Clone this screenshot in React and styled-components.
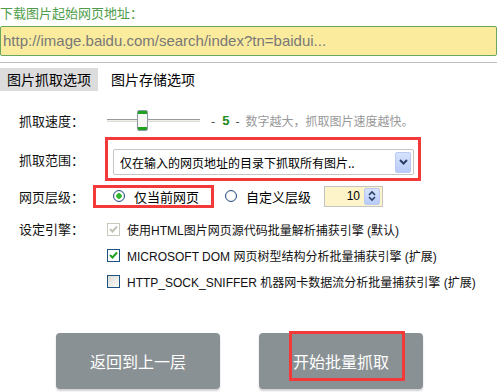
import React from 'react';
import styled, { createGlobalStyle } from 'styled-components';

const Global = createGlobalStyle`
    html, body {
        margin: 0;
        padding: 0;
        background: #fff;
    }
    body {
        font-family: "Liberation Sans", "Noto Sans CJK SC", sans-serif;
        color: #000;
    }
`

const Page = styled.div`
    width: 498px;
    height: 392px;
    overflow: hidden;
    display: flex;
    flex-direction: column;
`
const Title = styled.div`
    height: 26px;
    line-height: 26px;
    font-size: 13px;
    color: #4f9d4a;
    font-family: "Noto Sans CJK SC", sans-serif;
`
const UrlBox = styled.div`
    box-sizing: border-box;
    width: 497px;
    height: 30px;
    border: 1px solid #6aa75c;
    border-radius: 2px;
    background: #fbec9d;
    color: #787878;
    font-size: 15px;
    line-height: 28px;
    padding-left: 2px;
    white-space: nowrap;
    overflow: hidden;
`
const Divider = styled.div`
    margin-top: 6px;
    height: 1px;
    width: 497px;
    background: #bdbdbd;
`
const Tabs = styled.div`
    display: flex;
    margin-top: 5px;
    gap: 6px;
`
const Tab = styled.div`
    height: 23px;
    line-height: 23px;
    padding: 0 7px;
    font-size: 14px;
    font-family: "Noto Sans CJK SC", sans-serif;
    background: ${p => (p.$active ? '#dcdcdc' : 'transparent')};
`
const Form = styled.div`
    display: flex;
    flex-direction: column;
    padding-left: 19px;
    margin-top: 13px;
`
const Row = styled.div`
    display: flex;
    align-items: center;
    height: ${p => (p.$h ? `${p.$h}px` : 'auto')};
    margin-top: ${p => p.$mt || 0}px;
`
const Label = styled.div`
    width: ${p => p.$w || 88}px;
    flex-shrink: 0;
    font-size: 13px;
    font-family: "Noto Sans CJK SC", sans-serif;
    color: #111;
    align-self: ${p => (p.$top ? 'flex-start' : 'auto')};
    line-height: ${p => (p.$top ? '26px' : 'normal')};
`
const Highlight = styled.div`
    display: flex;
    align-items: center;
    box-sizing: border-box;
    border: 3px solid #f23a3a;
    padding: ${p => p.$pad};
    height: ${p => p.$h}px;
`

/* slider */
const Slider = styled.div`
    position: relative;
    width: 93px;
    height: 22px;
    display: flex;
    align-items: center;
`
const Track = styled.div`
    width: 100%;
    height: 3px;
    background: #f1efe6;
    border-top: 1px solid #999;
    border-bottom: 1px solid #ddd;
    box-sizing: border-box;
`
const Thumb = styled.div`
    position: absolute;
    left: 30px;
    top: 0;
    width: 11px;
    height: 21px;
    box-sizing: border-box;
    border: 1px solid #8a9aa6;
    border-radius: 2px;
    background: linear-gradient(to bottom, #21a121 0, #21a121 3px, #f6f6f2 3px, #f6f6f2 calc(100% - 3px), #21a121 calc(100% - 3px));
`
const SpeedNote = styled.div`
    display: flex;
    align-items: center;
    margin-left: 11px;
    font-size: 12px;
    font-family: "Noto Sans CJK SC", sans-serif;
    color: #999;
`
const Dash = styled.span`
    color: #333;
`
const Speed = styled.span`
    color: #1d8a1d;
    font-weight: bold;
    font-size: 13px;
    margin: 0 6px 0 7px;
    font-family: "Liberation Sans", sans-serif;
`
const Hint = styled.span`
    margin-left: 6px;
`

/* select */
const Select = styled.div`
    box-sizing: border-box;
    width: 301px;
    height: 26px;
    border: 1px solid #c5c5c5;
    border-radius: 2px;
    background: #fff;
    display: flex;
    align-items: center;
    justify-content: space-between;
    padding: 0 2px 0 6px;
    font-size: 12px;
    font-family: "Noto Sans CJK SC", sans-serif;
`
const ArrowBtn = styled.div`
    box-sizing: border-box;
    width: ${p => p.$w}px;
    height: ${p => p.$h}px;
    border: 1px solid #b9c9f4;
    border-radius: 2px;
    background: linear-gradient(to bottom, #d7e3fd, #b8cbf8);
    display: flex;
    align-items: center;
    justify-content: center;
`

/* radios */
const Radio = styled.span`
    box-sizing: border-box;
    width: 12px;
    height: 12px;
    border-radius: 50%;
    border: 1px solid #1f4f7f;
    background: radial-gradient(circle, ${p => (p.$on ? '#2fb52f 0, #2fb52f 2.5px,' : '')} #fff 3px, #e4e2da 100%);
    flex-shrink: 0;
`
const Option = styled.div`
    display: flex;
    align-items: center;
    gap: 9px;
    font-size: 13px;
    font-family: "Noto Sans CJK SC", sans-serif;
    margin-left: ${p => p.$ml || 0}px;
`
const NumberBox = styled.div`
    box-sizing: border-box;
    width: 59px;
    height: 21px;
    margin-left: 13px;
    border: 1px solid #c4c4c4;
    background: #fdf5c9;
    display: flex;
    align-items: center;
    justify-content: flex-end;
    gap: 4px;
    padding-right: 2px;
    font-size: 12px;
    font-family: "Liberation Sans", sans-serif;
`

/* checkboxes */
const Check = styled.span`
    box-sizing: border-box;
    width: 13px;
    height: 13px;
    border: 1px solid ${p => (p.$disabled ? '#cac8bb' : '#1c5180')};
    background: ${p => (p.$checked || p.$disabled ? '#fff' : 'linear-gradient(135deg, #dcdcd6, #fafaf8)')};
    display: flex;
    align-items: center;
    justify-content: center;
    flex-shrink: 0;
`
const EngineText = styled.span`
    margin-left: 7px;
    font-size: 12px;
    font-family: "Liberation Sans", "Noto Sans CJK SC", sans-serif;
    color: #111;
    white-space: nowrap;
`
const Engines = styled.div`
    display: flex;
    flex-direction: column;
`

/* buttons */
const Buttons = styled.div`
    display: flex;
    gap: 39px;
    padding-left: 56px;
    margin-top: 39px;
`
const Button = styled.div`
    position: relative;
    width: 164px;
    height: 56px;
    border-radius: 4px;
    background: #8a9194;
    box-shadow: 0 2px 2px rgba(0,0,0,0.18);
    color: #fff;
    font-size: 16px;
    font-family: "Noto Sans CJK SC", sans-serif;
    display: flex;
    align-items: center;
    justify-content: center;
`
const Mark = styled.div`
    position: absolute;
    left: 30px;
    top: -2px;
    width: 116px;
    height: 50px;
    box-sizing: border-box;
    border: 3px solid #f23a3a;
`

const Chevron = () => (
    <svg width="9" height="6" viewBox="0 0 9 6">
        <path d="M1 1 L4.5 4.5 L8 1" fill="none" stroke="#2a3f66" strokeWidth="2"/>
    </svg>
)

const UpDown = () => (
    <svg width="8" height="12" viewBox="0 0 8 12">
        <path d="M1 5 L4 2 L7 5" fill="none" stroke="#2a3f66" strokeWidth="1.6"/>
        <path d="M1 7 L4 10 L7 7" fill="none" stroke="#2a3f66" strokeWidth="1.6"/>
    </svg>
)

const Tick = ({ color }) => (
    <svg width="9" height="8" viewBox="0 0 9 8">
        <path d="M1 4 L3.5 6.5 L8 1.5" fill="none" stroke={color} strokeWidth="2"/>
    </svg>
)

const engines = [
    { text: '使用HTML图片网页源代码批量解析捕获引擎 (默认)', disabled: true },
    { text: 'MICROSOFT DOM 网页树型结构分析批量捕获引擎 (扩展)', checked: true },
    { text: 'HTTP_SOCK_SNIFFER 机器网卡数据流分析批量捕获引擎 (扩展)' },
]

const App = () => {
    return (
        <Page>
            <Global />
            <Title>下载图片起始网页地址：</Title>
            <UrlBox>http://image.baidu.com/search/index?tn=baidui...</UrlBox>
            <Divider />
            <Tabs>
                <Tab $active>图片抓取选项</Tab>
                <Tab>图片存储选项</Tab>
            </Tabs>
            <Form>
                <Row $h={33}>
                    <Label>抓取速度：</Label>
                    <Slider>
                        <Track />
                        <Thumb />
                    </Slider>
                    <SpeedNote>
                        <Dash>-</Dash><Speed>5</Speed><Dash>-</Dash>
                        <Hint>数字越大，抓取图片速度越快。</Hint>
                    </SpeedNote>
                </Row>
                <Row $h={44}>
                    <Label $w={86}>抓取范围：</Label>
                    <Highlight $h={44} $pad="9px 4px 3px 5px">
                        <Select>
                            <span>仅在输入的网页地址的目录下抓取所有图片..</span>
                            <ArrowBtn $w={16} $h={21}><Chevron /></ArrowBtn>
                        </Select>
                    </Highlight>
                </Row>
                <Row $h={24} $mt={3}>
                    <Label $w={74}>网页层级：</Label>
                    <Highlight $h={23} $pad="0 12px 0 17px">
                        <Option><Radio $on />仅当前网页</Option>
                    </Highlight>
                    <Option $ml={11}><Radio />自定义层级</Option>
                    <NumberBox>
                        <span>10</span>
                        <ArrowBtn $w={16} $h={17}><UpDown /></ArrowBtn>
                    </NumberBox>
                </Row>
                <Row $mt={8}>
                    <Label $top>设定引擎：</Label>
                    <Engines>
                        {engines.map((e, i) => (
                            <Row $h={26} key={i}>
                                <Check $checked={e.checked} $disabled={e.disabled}>
                                    {e.checked && <Tick color="#21a121" />}
                                    {e.disabled && <Tick color="#c2c1b6" />}
                                </Check>
                                <EngineText>{e.text}</EngineText>
                            </Row>
                        ))}
                    </Engines>
                </Row>
            </Form>
            <Buttons>
                <Button>返回到上一层</Button>
                <Button>
                    开始批量抓取
                    <Mark />
                </Button>
            </Buttons>
        </Page>
    )
}

export default App;
